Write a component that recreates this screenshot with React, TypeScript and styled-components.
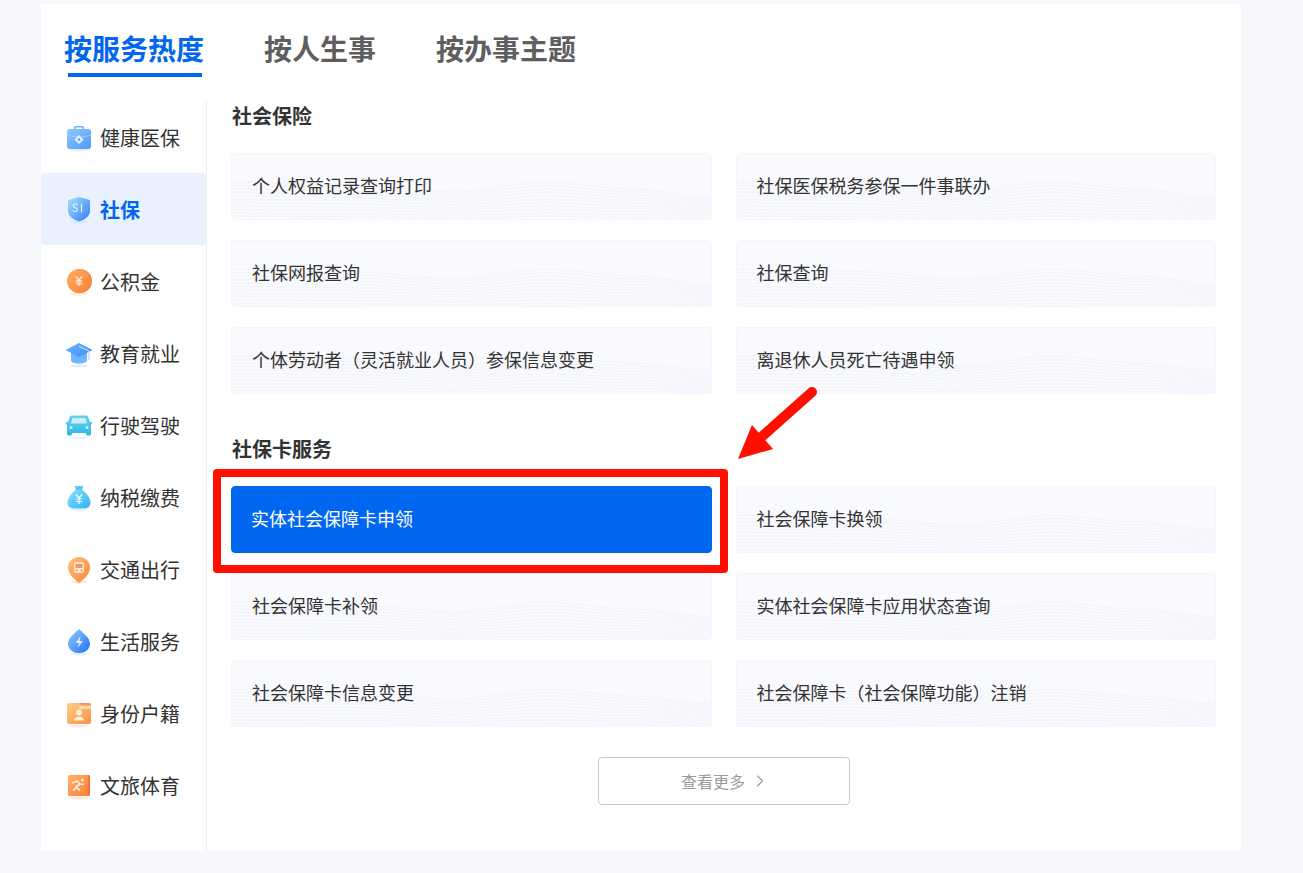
import React from 'react';
import styled, { createGlobalStyle } from 'styled-components';
import { ChevronRight } from 'lucide-react';

const Global = createGlobalStyle`
  html, body { margin: 0; padding: 0; background: #f6f8fb; }
  body { font-family: "Noto Sans CJK SC", "Liberation Sans", sans-serif; color: #333; }
  * { box-sizing: border-box; }
`;

const Page = styled.div`
  width: 1303px;
  height: 873px;
  padding: 4px 0 0 41px;
  overflow: hidden;
`;

const Panel = styled.main`
  position: relative;
  width: 1200px;
  height: 847px;
  background: #fff;
  display: flex;
  flex-direction: column;
`;

const TabBar = styled.nav`
  height: 96px;
  flex: none;
  display: flex;
  align-items: center;
  gap: 60px;
  padding: 0 0 8px 23px;
`;

const Tab = styled.div<{ $active?: boolean }>`
  position: relative;
  font-size: 28px;
  line-height: 40px;
  font-weight: 700;
  color: ${p => (p.$active ? '#0267f0' : '#5e5e5e')};
  ${p =>
    p.$active &&
    `&::after {
      content: '';
      position: absolute;
      left: 4px;
      right: 2px;
      bottom: -9px;
      height: 4px;
      background: #0267f0;
    }`}
`;

const Body = styled.div`
  flex: 1;
  display: flex;
  min-height: 0;
`;

const Sidebar = styled.aside`
  width: 166px;
  flex: none;
  border-right: 1px solid #eef0f3;
  padding-top: 1px;
`;

const NavItem = styled.div<{ $active?: boolean }>`
  height: 72px;
  display: flex;
  align-items: center;
  gap: 7px;
  padding: 2px 0 0 24px;
  font-size: 20px;
  line-height: 28px;
  border-radius: 4px;
  background: ${p => (p.$active ? '#e9f1fe' : 'transparent')};
  color: ${p => (p.$active ? '#0267f0' : '#333')};
  font-weight: ${p => (p.$active ? 700 : 400)};
  svg { flex: none; }
`;

const Content = styled.section`
  flex: 1;
  min-width: 0;
  padding: 1px 25px 0 24px;
  display: flex;
  flex-direction: column;
`;

const Heading = styled.h3<{ $spaced?: boolean }>`
  margin: ${p => (p.$spaced ? '40px' : '0')} 0 22px 1px;
  height: 30px;
  font-size: 20px;
  line-height: 30px;
  font-weight: 700;
  color: #333;
`;

const Grid = styled.div`
  display: grid;
  grid-template-columns: 1fr 1fr;
  gap: 20px 24px;
`;

const Card = styled.div<{ $active?: boolean }>`
  position: relative;
  height: 67px;
  display: flex;
  align-items: center;
  padding: 0 0 3px ${p => (p.$active ? '19px' : '20px')};
  font-size: 18px;
  line-height: 26px;
  border-radius: 4px;
  border: 1px solid ${p => (p.$active ? '#0267f0' : '#f3f5fa')};
  background: ${p => (p.$active ? '#0267f0' : '#f9fafe')};
  color: ${p => (p.$active ? '#fff' : '#333')};
`;

const CardLabel = styled.span`
  position: relative;
`;

const WaveArt = styled.svg`
  position: absolute;
  inset: 0;
  width: 100%;
  height: 100%;
  border-radius: 3px;
`;

const Callout = styled.div`
  position: absolute;
  left: -19px;
  right: -17px;
  top: -18px;
  bottom: -21px;
  border: 8px solid #ff0f00;
  border-radius: 4px;
  pointer-events: none;
`;

const ArrowArt = styled.svg`
  position: absolute;
  left: 689px;
  top: 376px;
`;

const MoreRow = styled.div`
  display: flex;
  justify-content: center;
  margin-top: 30px;
`;

const MoreButton = styled.button`
  width: 252px;
  height: 48px;
  display: flex;
  align-items: center;
  justify-content: center;
  gap: 5px;
  background: #fff;
  border: 1px solid #c6c6c6;
  border-radius: 4px;
  font-family: inherit;
  font-size: 16px;
  color: #9a9a9a;
  padding: 0 0 0 4px;
`;

const keyPts: [number, number][] = [
  [0, 29], [110, 31], [225, 39], [316, 29], [400, 36], [481, 44],
];
const curve = (x: number) => {
  for (let i = 0; i < keyPts.length - 1; i++) {
    const [x0, y0] = keyPts[i];
    const [x1, y1] = keyPts[i + 1];
    if (x <= x1) {
      const t = (x - x0) / (x1 - x0);
      return y0 + (y1 - y0) * (t * t * (3 - 2 * t));
    }
  }
  return 44;
};
const wavePaths = Array.from({ length: 11 }, (_, n) => {
  const k = n / 11;
  let d = '';
  for (let x = 0; x <= 481; x += 12) {
    const top = curve(x);
    d += `${x === 0 ? 'M' : 'L'}${x} ${(top + (68 - top) * k).toFixed(1)} `;
  }
  return d + `L481 ${(curve(481) + (68 - curve(481)) * k).toFixed(1)}`;
});

const Waves = () => (
  <WaveArt viewBox="0 0 481 67" preserveAspectRatio="none" aria-hidden>
    {wavePaths.map((d, i) => (
      <path key={i} d={d} fill="none" stroke="#f1f3f9" strokeWidth="1" />
    ))}
  </WaveArt>
);

const Grad = ({ id, a, b, x2 = 1, y2 = 1 }: { id: string; a: string; b: string; x2?: number; y2?: number }) => (
  <linearGradient id={id} x1="0" y1="0" x2={x2} y2={y2}>
    <stop offset="0" stopColor={a} />
    <stop offset="1" stopColor={b} />
  </linearGradient>
);

const Ic = ({ children, shadow = '#cfe0fb' }: { children: React.ReactNode; shadow?: string }) => (
  <svg width="28" height="28" viewBox="0 0 28 28">
    <ellipse cx="14" cy="26" rx="9" ry="1.4" fill={shadow} opacity=".55" />
    {children}
  </svg>
);

const icons: Record<string, React.ReactNode> = {
  health: (
    <Ic>
      <defs><Grad id="g1" a="#8ccbff" b="#4f99f6" /></defs>
      <path d="M9 6V3.5A1.5 1.5 0 0 1 10.5 2h7A1.5 1.5 0 0 1 19 3.500V6h-1.600V3.600h-6.800V6z" fill="#74b0f7" />
      <rect x="2" y="5" width="24" height="20" rx="3" fill="url(#g1)" />
      <path d="M2 11c7 2.600 17 2.600 24 0" stroke="#a6d4ff" strokeWidth=".8" fill="none" />
      <path d="M14 11l4.500 4.500-4.500 4.500-4.500-4.500z" fill="#e3f1ff" />
      <path d="M14 13.800l1.700 1.700-1.700 1.700-1.700-1.700z" fill="#5ea4f7" />
    </Ic>
  ),
  social: (
    <Ic>
      <defs><Grad id="g2" a="#a6e0fd" b="#2f7df3" /></defs>
      <path d="M14 1l11 3v10.500c0 5.800-5.400 9.300-11 11-5.600-1.700-11-5.200-11-11V4z" fill="url(#g2)" />
      <path d="M12.300 8.700c-.9-1-4-1-4 1.100 0 2.400 4.200 1.500 4.200 3.900 0 2.300-3.500 2.200-4.600 1M16.500 8v8" stroke="#e3f3ff" strokeWidth="1.200" fill="none" strokeLinecap="round" />
    </Ic>
  ),
  fund: (
    <Ic shadow="#fbd9bd">
      <defs><Grad id="g3" a="#ffb26a" b="#f97f30" /></defs>
      <circle cx="15" cy="13" r="12" fill="#f47d38" />
      <circle cx="14" cy="13" r="12" fill="url(#g3)" />
      <path d="M11 8.500l3 3.700 3-3.700M14 12.200V18M11 13h6M11 15.500h6" stroke="#ffe9d3" strokeWidth="1.300" fill="none" />
    </Ic>
  ),
  edu: (
    <Ic>
      <defs><Grad id="g4" a="#6cb6ff" b="#3b8bf5" /><Grad id="g4b" a="#6db4fb" b="#74b4fb" x2={0} /></defs>
      <path d="M6 12v9c3 3.500 13 3.500 16 0v-9z" fill="url(#g4b)" />
      <path d="M14 3l13.500 7L14 17 .5 10z" fill="url(#g4)" />
      <path d="M14 6.500L24 11v9" stroke="#d5eaff" strokeWidth="1" fill="none" />
      <rect x="23" y="12" width="2" height="8" rx="1" fill="#cfe6ff" />
    </Ic>
  ),
  car: (
    <Ic shadow="#cfe8f5">
      <defs><Grad id="g5" a="#62d4f3" b="#2cb8e8" x2={0} /></defs>
      <path d="M7 3.500h14c1 0 1.800.5 2.200 1.500L25 10h2v2.500h-1v9.500a1.500 1.500 0 0 1-1.500 1.500h-2A1.500 1.500 0 0 1 21 22v-1H7v1a1.500 1.500 0 0 1-1.500 1.500h-2A1.500 1.500 0 0 1 2 22v-9.500H1V10h2l1.800-5C5.200 4 6 3.500 7 3.500z" fill="url(#g5)" />
      <path d="M7.500 6h13l1.500 5.500H6z" fill="#cdeffa" />
      <circle cx="6" cy="15.500" r="1.500" fill="#eafaff" />
      <circle cx="22" cy="15.500" r="1.500" fill="#eafaff" />
    </Ic>
  ),
  tax: (
    <Ic shadow="#d3ecf8">
      <defs><Grad id="g6" a="#8be2fb" b="#2fb0f4" /></defs>
      <path d="M9.500 1.500c1.500 1 3 1 4.500.2 1.500.8 3 .8 4.500-.2l-1.500 4.500h-6z" fill="#5cc6f3" />
      <path d="M10.500 6h7c3 2.500 8 7.500 8 12.500 0 4.500-3.500 6-7 6h-9c-3.500 0-7-1.500-7-6C2.500 13.500 7.500 8.500 10.500 6z" fill="url(#g6)" />
      <path d="M11 10.500l3 3.500 3-3.500M14 14v6M11 15h6M11 17.500h6" stroke="#f0fbff" strokeWidth="1.200" fill="none" />
    </Ic>
  ),
  traffic: (
    <Ic shadow="#fbd9bd">
      <defs><Grad id="g7" a="#ffc07c" b="#f9843a" /></defs>
      <path d="M14 1c6 0 11 4.600 11 10.400C25 18 18 24 14 27 10 24 3 18 3 11.400 3 5.600 8 1 14 1z" fill="url(#g7)" />
      <rect x="9" y="6" width="10" height="11" rx="2" fill="#ffe9d6" />
      <rect x="10.500" y="8" width="7" height="4" fill="#f9924d" />
      <circle cx="11.500" cy="14.500" r="1" fill="#f9924d" />
      <circle cx="16.500" cy="14.500" r="1" fill="#f9924d" />
    </Ic>
  ),
  life: (
    <Ic>
      <defs><Grad id="g8" a="#9ccffb" b="#1f6ff2" /></defs>
      <path d="M14 1c3 3.500 11 8 11 14.500A10.500 9.500 0 0 1 14 25 10.500 9.500 0 0 1 3 15.500C3 9 11 4.500 14 1z" fill="url(#g8)" />
      <path d="M15.500 8l-5 7h3.500l-1.500 5 5.500-7h-3.500z" fill="#dcecff" />
    </Ic>
  ),
  id: (
    <Ic shadow="#fbd9bd">
      <defs><Grad id="g9" a="#ffd084" b="#fb8f45" /></defs>
      <rect x="2" y="3" width="24" height="21" rx="2" fill="url(#g9)" />
      <path d="M4 3h10l2 2h10V5a2 2 0 0 0-2-2z" fill="#fa9068" />
      <path d="M14 6h12v3H15z" fill="#ffe7c8" opacity=".7" />
      <circle cx="14" cy="12.500" r="3" fill="#fff0dc" />
      <path d="M9 20.500c0-5 10-5 10 0z" fill="#fff0dc" />
    </Ic>
  ),
  sport: (
    <Ic shadow="#fbd9bd">
      <defs><Grad id="g10" a="#ffb26a" b="#fa7f3a" /></defs>
      <rect x="5" y="3" width="20" height="21" rx="1.500" fill="#f46f3b" />
      <rect x="3" y="3" width="20" height="21" rx="1.500" fill="url(#g10)" />
      <circle cx="17.500" cy="8" r="1.600" fill="#ffeedd" />
      <path d="M7 11l5-2 3 3-4 3 4 3.500M12 15l-4 3.500M15 12l4 .5" stroke="#ffeedd" strokeWidth="1.700" fill="none" strokeLinejoin="round" />
    </Ic>
  ),
};

const nav = [
  ['health', '健康医保'],
  ['social', '社保'],
  ['fund', '公积金'],
  ['edu', '教育就业'],
  ['car', '行驶驾驶'],
  ['tax', '纳税缴费'],
  ['traffic', '交通出行'],
  ['life', '生活服务'],
  ['id', '身份户籍'],
  ['sport', '文旅体育'],
];

const insurance = [
  '个人权益记录查询打印',
  '社保医保税务参保一件事联办',
  '社保网报查询',
  '社保查询',
  '个体劳动者（灵活就业人员）参保信息变更',
  '离退休人员死亡待遇申领',
];

const cardServices = [
  '实体社会保障卡申领',
  '社会保障卡换领',
  '社会保障卡补领',
  '实体社会保障卡应用状态查询',
  '社会保障卡信息变更',
  '社会保障卡（社会保障功能）注销',
];

export default function App() {
  return (
    <>
      <Global />
      <Page>
        <Panel>
          <TabBar>
            <Tab $active>按服务热度</Tab>
            <Tab>按人生事</Tab>
            <Tab>按办事主题</Tab>
          </TabBar>
          <Body>
            <Sidebar>
              {nav.map(([key, label]) => (
                <NavItem key={key} $active={key === 'social'}>
                  {icons[key]}
                  {label}
                </NavItem>
              ))}
            </Sidebar>
            <Content>
              <Heading>社会保险</Heading>
              <Grid>
                {insurance.map(t => (
                  <Card key={t}>
                    <Waves />
                    <CardLabel>{t}</CardLabel>
                  </Card>
                ))}
              </Grid>
              <Heading $spaced>社保卡服务</Heading>
              <Grid>
                {cardServices.map((t, i) => (
                  <Card key={t} $active={i === 0}>
                    {i !== 0 && <Waves />}
                    <CardLabel>{t}</CardLabel>
                    {i === 0 && <Callout />}
                  </Card>
                ))}
              </Grid>
              <MoreRow>
                <MoreButton>
                  查看更多
                  <ChevronRight size={20} strokeWidth={1.3} />
                </MoreButton>
              </MoreRow>
            </Content>
          </Body>
          <ArrowArt width="90" height="90" viewBox="0 0 90 90">
            <path d="M82 12L28 60" stroke="#ff0f00" strokeWidth="10" strokeLinecap="round" fill="none" />
            <path d="M8 79L22 45 43 69z" fill="#ff0f00" />
          </ArrowArt>
        </Panel>
      </Page>
    </>
  );
}
